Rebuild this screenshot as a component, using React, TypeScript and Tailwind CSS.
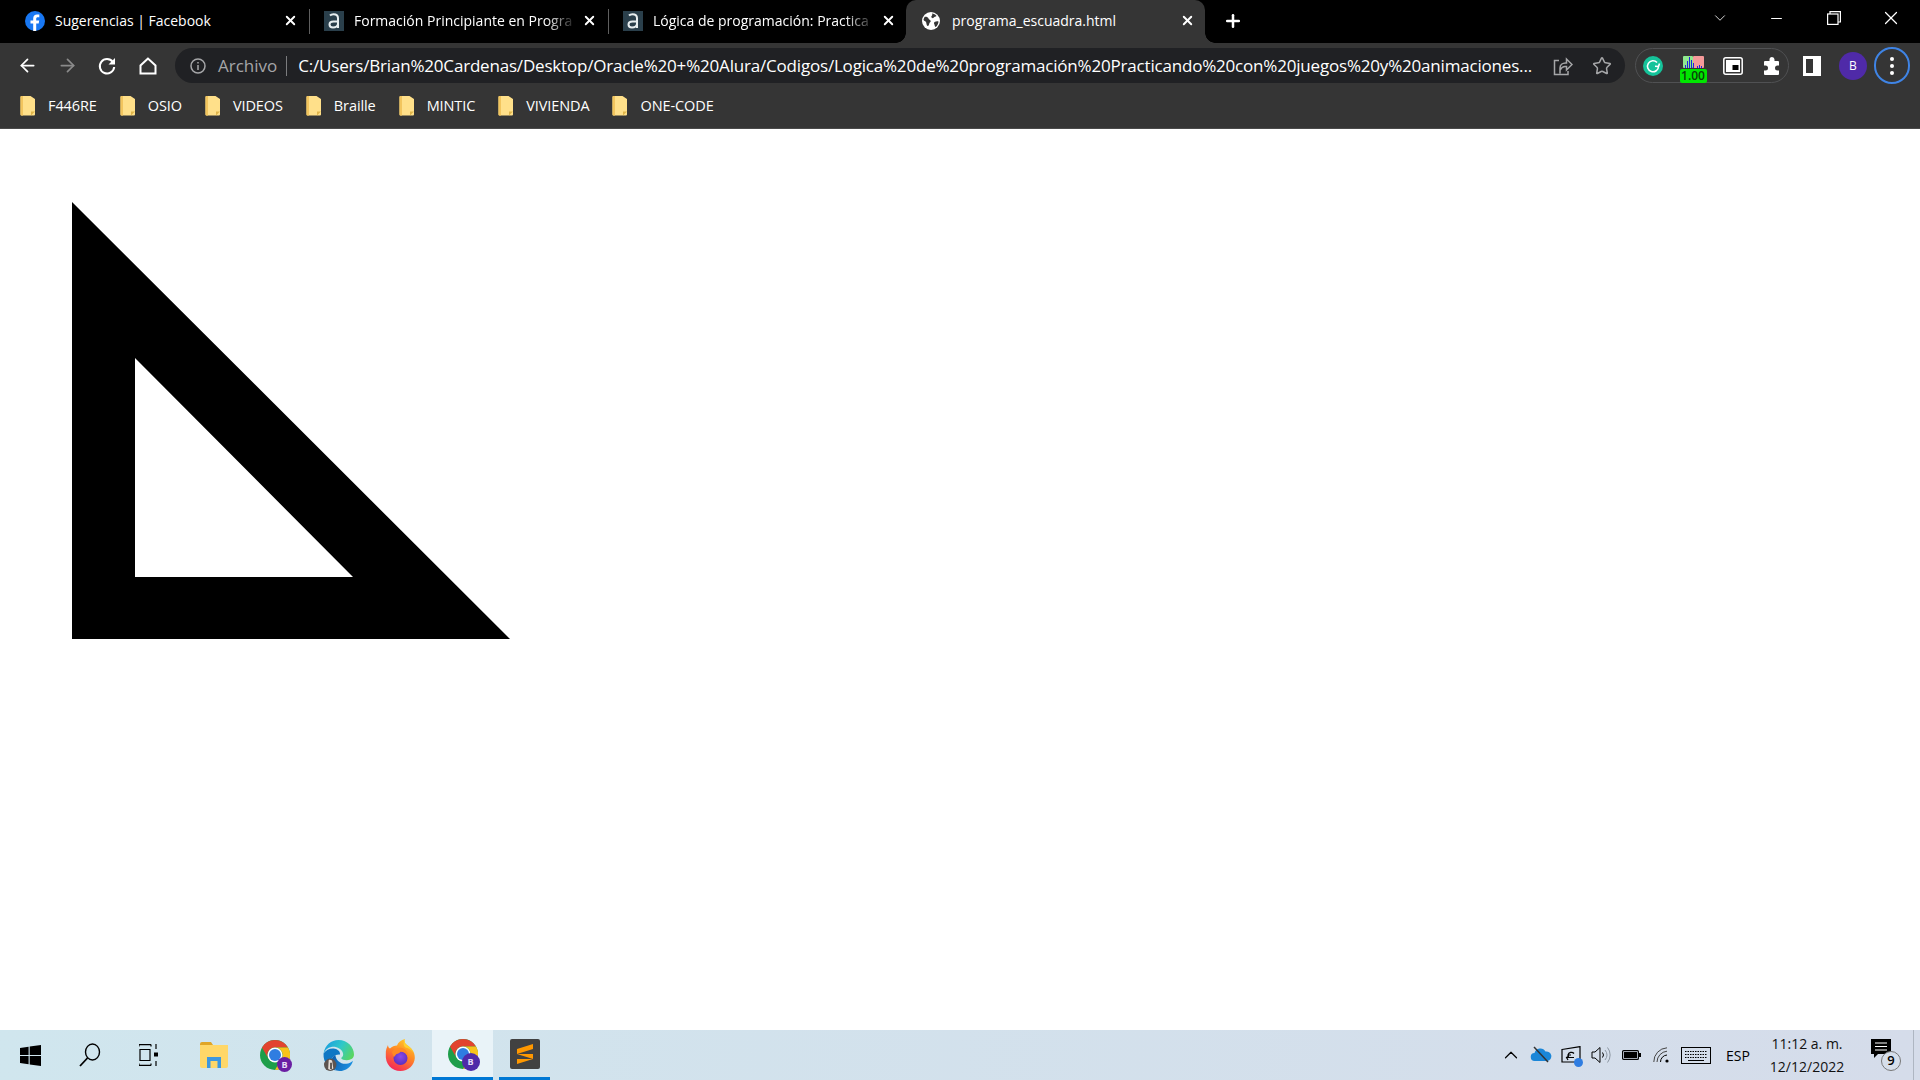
import type { ReactNode } from "react";
import { ArrowLeft, ArrowRight, ChevronDown, ChevronUp, Minus, Plus, Star, X } from "lucide-react";

const FONT = "font-['Open_Sans','Noto_Sans',sans-serif]";

function FacebookIcon() {
  return (
    <svg width="20" height="20" viewBox="0 0 20 20">
      <circle cx="10" cy="10" r="10" fill="#1877f2" />
      <path d="M11.2 20v-7.4h2.5l.5-3h-3V7.8c0-.9.4-1.6 1.700-1.600h1.400V3.600c-.6-.1-1.400-.2-2.200-.2-2.400 0-3.900 1.400-3.900 4v2.200H5.500v3h2.700V20z" fill="#fff" />
    </svg>
  );
}

function AluraIcon() {
  return (
    <div className="flex h-[20px] w-[20px] items-center justify-center bg-[#2a3f4b]">
      <svg width="12" height="16" viewBox="0 0 12 16" fill="none" stroke="#e8eef0" strokeWidth="2">
        <path d="M2 2.500c1-1 2-1.300 3.500-1.300 2.600 0 4.500 1.300 4.500 4V15M10 8.500H5.500C3 8.500 1.500 9.700 1.500 11.500s1.500 3 3.500 3c2.700 0 5-1.500 5-4" />
      </svg>
    </div>
  );
}

function GlobeIcon() {
  return (
    <svg width="18" height="18" viewBox="0 0 18 18">
      <circle cx="9" cy="9" r="9" fill="#fff" />
      <path d="M2.500 5c1.500-.5 3.500 0 4 1.500.4 1.300 2 1.200 2.200 2.500.2 1.200-1.200 1.300-1.400 2.500-.2 1-.6 2.500-1.600 2.500-1.200-.5-1.200-2.500-1.500-3.500C3.800 9 1.500 9 1.500 7.500zM10 1.500c1.500 0 3.800 1 4.500 2.500-.8.800-2.500.7-3 1.800-.3.800-2 .2-2.200-.8C9.100 4 11 3.300 10 1.500zM12.500 10c1-.6 3-.8 4-.5 0 2-1.200 4.300-2.800 5.500-1.200-.5-.9-2-1.500-3-.3-.7-.3-1.600.3-2z" fill="#353535" />
    </svg>
  );
}

function Tab({ icon, title, active, fade }: { icon: ReactNode; title: string; active?: boolean; fade?: boolean }) {
  return (
    <div className={`relative flex h-full w-[299px] shrink-0 items-center pb-[2px] pl-[16px] pr-[10px] ${active ? "rounded-t-[10px] bg-[#353535]" : ""}`}>
      {active && (
        <>
          <div className="absolute bottom-0 left-[-10px] h-[10px] w-[10px] bg-[radial-gradient(circle_at_0_0,#000_9.500px,#353535_10px)]" />
          <div className="absolute bottom-0 right-[-10px] h-[10px] w-[10px] bg-[radial-gradient(circle_at_100%_0,#000_9.500px,#353535_10px)]" />
        </>
      )}
      <div className="flex w-[30px] shrink-0 items-center">{icon}</div>
      <span className={`min-w-0 flex-1 whitespace-nowrap text-[14px] text-white ${fade ? "[mask-image:linear-gradient(to_right,#000_84%,#0002_96%)]" : ""}`}>
        {title}
      </span>
      <X size={15} strokeWidth={3} className="shrink-0 text-white" />
    </div>
  );
}

function TabSeparator() {
  return <div className="my-auto ml-[-1px] h-[25px] w-px shrink-0 translate-x-[2px] bg-[#5f5f5f]" />;
}

function RestoreIcon() {
  return (
    <svg width="14" height="14" viewBox="0 0 14 14" fill="none" stroke="#fff" strokeWidth="1.200">
      <rect x=".6" y="3" width="10.400" height="10.400" />
      <path d="M3 3V.6h10.400V11H11" />
    </svg>
  );
}

function TabStrip() {
  return (
    <div className="flex h-[43px] shrink-0 items-stretch bg-black pl-[9px]">
      <Tab icon={<FacebookIcon />} title="Sugerencias | Facebook" />
      <TabSeparator />
      <Tab icon={<AluraIcon />} title="Formación Principiante en Progra" fade />
      <TabSeparator />
      <Tab icon={<AluraIcon />} title="Lógica de programación: Practica" fade />
      <Tab icon={<GlobeIcon />} title="programa_escuadra.html" active />
      <div className="flex w-[56px] items-center justify-center pb-[2px]">
        <Plus size={20} strokeWidth={3} className="text-white" />
      </div>
      <div className="flex flex-1 items-start justify-end pt-[8px] text-white">
        <div className="flex h-[20px] w-[56px] items-center justify-center">
          <ChevronDown size={18} strokeWidth={1.100} />
        </div>
        <div className="flex h-[20px] w-[57px] items-center justify-center">
          <Minus size={17} strokeWidth={1.400} />
        </div>
        <div className="flex h-[20px] w-[57px] items-center justify-center">
          <RestoreIcon />
        </div>
        <div className="flex h-[20px] w-[58px] items-center justify-center">
          <X size={22} strokeWidth={1.300} />
        </div>
      </div>
    </div>
  );
}

function ReloadIcon() {
  return (
    <svg width="20" height="20" viewBox="0 0 20 20" fill="none">
      <path d="M15.800 6A7.200 7.200 0 1 0 17.200 11" stroke="#fff" strokeWidth="2" />
      <path d="M18 2v6.500h-6.500z" fill="#fff" />
    </svg>
  );
}

function HomeIcon() {
  return (
    <svg width="20" height="20" viewBox="0 0 20 20" fill="none" stroke="#fff" strokeWidth="2">
      <path d="M10 2.500L2.500 9.500v8h15v-8z" strokeLinejoin="miter" />
    </svg>
  );
}

function ShareIcon() {
  return (
    <svg width="20" height="20" viewBox="0 0 20 20" fill="none" stroke="#a5a6a8" strokeWidth="1.500">
      <path d="M7 17.500V12c0-3 2.500-5 5.500-5h1V3L19 8.500 13.500 14V10.500H12C10 10.500 8.500 11.500 7 14M6 4.500H1.500V18.500H15V15" />
    </svg>
  );
}

function ChartExtension() {
  return (
    <div className="relative flex h-[34px] w-[27px] flex-col items-center">
      <svg width="21" height="12" viewBox="0 0 21 12" className="mt-[7px]">
        <rect width="10" height="12" rx="1" fill="#8fe88f" />
        <rect x="10" width="11" height="12" rx="1" fill="#f59a9a" />
        <path d="M2 12V9h1v3zM4 12V5h1v7zM6 12V1h1v11zM8 12V4h1v8zM10 12V7h1v5zM14 12v-2h1v2zM16 12V9h1v3zM18 12v-2h1v2z" fill="#2222dd" />
      </svg>
      <div className="mt-px flex h-[14px] w-[27px] items-center justify-center rounded-[2px] bg-[#00e600] text-[12px] font-semibold leading-none text-[#0b3d0b]">
        1.00
      </div>
    </div>
  );
}

function ToolbarRight() {
  return (
    <>
      <div className="ml-[10px] flex h-[35px] w-[154px] shrink-0 items-center rounded-full border border-[#505153]">
        <div className="flex w-[27px] shrink-0 justify-end">
          <svg width="20" height="20" viewBox="0 0 20 20">
            <circle cx="10" cy="10" r="10" fill="#15c39a" />
            <path d="M14 6.500A5.500 5.500 0 1 0 15.500 10.500M15.500 10.500l-3.500-.2M15.500 10.500l1-3" fill="none" stroke="#fff" strokeWidth="1.600" />
          </svg>
        </div>
        <div className="ml-[14px] flex w-[32px] justify-center">
          <ChartExtension />
        </div>
        <div className="ml-[8px] flex w-[32px] justify-center">
          <svg width="20" height="18" viewBox="0 0 20 18">
            <rect x=".8" y=".8" width="18.400" height="16.400" rx="2" fill="none" stroke="#fff" strokeWidth="1.500" />
            <rect x="3" y="3" width="14" height="12" fill="#fff" />
            <rect x="9.500" y="8" width="6" height="5" fill="#000" />
          </svg>
        </div>
        <div className="ml-[13px] flex w-[20px] justify-center">
          <svg width="18" height="18" viewBox="0 0 18 18" fill="#fff">
            <path d="M6.500 2.500a2.500 2.500 0 0 1 5 0V4H15a1 1 0 0 1 1 1v3.500h-1.500a2.500 2.500 0 0 0 0 5H16V17a1 1 0 0 1-1 1H2a1 1 0 0 1-1-1v-3.500h1.500a2.500 2.500 0 0 0 0-5H1V5a1 1 0 0 1 1-1h4.500z" />
          </svg>
        </div>
      </div>
      <div className="ml-[13px] flex w-[20px] shrink-0 justify-center">
        <div className="h-[20px] w-[18px] border-[3px] border-r-[8px] border-white" />
      </div>
      <div className="ml-[17px] flex h-[28px] w-[28px] shrink-0 items-center justify-center rounded-full bg-[#4f2aa8] text-[12px] text-white">
        B
      </div>
      <div className="ml-[7px] flex h-[37px] w-[36px] shrink-0 flex-col items-center justify-center gap-[3px] rounded-full border-[2px] border-[#3f84e5]">
        <div className="h-[4px] w-[4px] rounded-full bg-white" />
        <div className="h-[4px] w-[4px] rounded-full bg-white" />
        <div className="h-[4px] w-[4px] rounded-full bg-white" />
      </div>
    </>
  );
}

function Toolbar() {
  return (
    <div className="flex h-[45px] shrink-0 items-center bg-[#353535] pl-[17px]">
      <div className="flex w-[158px] shrink-0 items-center text-white">
        <div className="flex w-[40px] justify-start"><ArrowLeft size={21} strokeWidth={2} /></div>
        <div className="flex w-[40px] justify-start text-[#8a8a8a]"><ArrowRight size={21} strokeWidth={2} /></div>
        <div className="flex w-[41px] justify-start"><ReloadIcon /></div>
        <div className="flex w-[37px] justify-start"><HomeIcon /></div>
      </div>
      <div className="flex h-[35px] w-[1450px] shrink-0 items-center rounded-full bg-[#202124] pl-[14px] text-[17px]">
        <svg width="18" height="18" viewBox="0 0 18 18" fill="none" stroke="#a5a6a8" strokeWidth="1.500" className="shrink-0">
          <circle cx="9" cy="9" r="7" />
          <path d="M9 8v5M9 5v1.500" />
        </svg>
        <span className="ml-[11px] whitespace-nowrap text-[#a5a6a8]">Archivo</span>
        <div className="ml-[9px] h-[20px] w-px shrink-0 bg-[#7b7c7e]" />
        <span className="ml-[11px] w-[1236px] shrink-0 whitespace-nowrap tracking-[-0.19px] text-white">
          C:/Users/Brian%20Cardenas/Desktop/Oracle%20+%20Alura/Codigos/Logica%20de%20programación%20Practicando%20con%20juegos%20y%20animaciones...
        </span>
        <div className="ml-[19px] flex w-[20px] shrink-0 justify-center"><ShareIcon /></div>
        <div className="ml-[19px] flex w-[20px] shrink-0 justify-center"><Star size={20} strokeWidth={1.800} className="text-[#a5a6a8]" /></div>
      </div>
      <ToolbarRight />
    </div>
  );
}

function FolderIcon() {
  return (
    <svg width="16" height="20" viewBox="0 0 16 20" className="shrink-0">
      <path d="M1.500 0h9l4.500 3v15.500a1 1 0 0 1-1 1H1.500a1 1 0 0 1-1-1V1a1 1 0 0 1 1-1z" fill="#ffe08a" />
      <path d="M11 19.500v-4h4" fill="#e0b54a" />
      <path d="M.5 1a1 1 0 0 1 1-1H3v19.500H1.500a1 1 0 0 1-1-1z" fill="#f2c55e" />
    </svg>
  );
}

const bookmarks = ["F446RE", "OSIO", "VIDEOS", "Braille", "MINTIC", "VIVIENDA", "ONE-CODE"];

function BookmarksBar() {
  return (
    <div className="flex h-[41px] shrink-0 items-center gap-[23px] border-b border-[#4a4a4a] bg-[#353535] pb-[5px] pl-[20px]">
      {bookmarks.map((name) => (
        <div key={name} className="flex items-center gap-[12px]">
          <FolderIcon />
          <span className="text-[14.500px] tracking-[-0.1px] text-white">{name}</span>
        </div>
      ))}
    </div>
  );
}

function Escuadra() {
  return (
    <svg width="438" height="437" viewBox="0 0 438 437" className="ml-[72px] mt-[73px]">
      <path fillRule="evenodd" d="M0 0L0 437L438 437ZM63 156L281 375L63 375Z" fill="#000" />
    </svg>
  );
}

function ChromeIcon({ badge }: { badge: string }) {
  return (
    <div className="relative">
      <svg width="30" height="30" viewBox="0 0 30 30">
        <circle cx="15" cy="15" r="15" fill="#1e9e4a" />
        <path d="M15 0a15 15 0 0 1 13 7.500H15A7.500 7.500 0 0 0 8.500 19L2 7.500A15 15 0 0 1 15 0z" fill="#e2432f" />
        <path d="M28 7.500A15 15 0 0 1 15 30l6.500-11.200A7.500 7.500 0 0 0 15 7.500z" fill="#f8c21c" />
        <circle cx="15" cy="15" r="7.500" fill="#fff" />
        <circle cx="15" cy="15" r="6" fill="#2f7de1" />
      </svg>
      <div className={`absolute bottom-[-2px] right-[-2px] flex items-center justify-center rounded-full text-[9px] font-bold text-[#e6dcf5] ${badge}`}>
        B
      </div>
    </div>
  );
}

function EdgeIcon() {
  return (
    <svg width="31" height="31" viewBox="0 0 30 30">
      <defs>
        <linearGradient id="edgeTop" x1="0" y1="0.300" x2="1" y2="0.700">
          <stop offset="0" stopColor="#1b9ee0" />
          <stop offset="0.500" stopColor="#2fc8c8" />
          <stop offset="1" stopColor="#5bd65f" />
        </linearGradient>
        <linearGradient id="edgeBottom" x1="0" y1="0" x2="1" y2="0.300">
          <stop offset="0" stopColor="#0d5aa8" />
          <stop offset="1" stopColor="#1b8fe0" />
        </linearGradient>
      </defs>
      <path d="M.5 13C2 5 8 0 15 0c9 0 15 7 15 14 0 3.500-3 5.500-7 5.500-2.500 0-5-.8-5.500-2.200 1.800-1.200 2.500-3 1.700-5C17.800 8.500 13 6 8 6.800 4.500 7.500 2 10 .5 13z" fill="url(#edgeTop)" />
      <path d="M.5 13c2.500-3.500 7-5.500 11-4.500 3 .7 5.200 2.800 5 5.500-5-.5-8.500 2.500-8.500 7 0 3.500 2.500 6.500 5 8.500C6 29 0 22 .5 13z" fill="#0f77c4" />
      <path d="M13 29.500c-3-2.500-5-5.500-5-8.500 0-3 1.800-5.500 4-6.500.3 5 5 9 10.500 8.500 2.700-.2 5-1.500 6.500-3-1.500 6-7 10-13 10z" fill="url(#edgeBottom)" />
      <circle cx="7" cy="24" r="6" fill="#5c5450" />
      <path d="M5.500 19.500c1.500-.7 3.500 0 3.500 1.500l1 6.500-3 1.500-2-1z" fill="#e5ddd6" />
      <path d="M7 22h1.500v6H7z" fill="#3b3532" />
    </svg>
  );
}

function FirefoxIcon() {
  return (
    <svg width="30" height="32" viewBox="0 0 30 32">
      <defs>
        <linearGradient id="foxBody" x1="0.800" y1="0" x2="0.300" y2="1">
          <stop offset="0" stopColor="#ffd02e" />
          <stop offset="0.450" stopColor="#ff8a24" />
          <stop offset="1" stopColor="#f5245a" />
        </linearGradient>
        <radialGradient id="foxCore" cx="0.500" cy="0.400" r="0.600">
          <stop offset="0" stopColor="#8a4be8" />
          <stop offset="1" stopColor="#5b2fc0" />
        </radialGradient>
      </defs>
      <path d="M.8 15C.5 11 2 8 3 6c0 2 .8 3 2 3.500C7 7.500 9.500 6.500 12 6.500 13 3.500 16 1 20 0c-1 2.500-.2 4.500 2 6 4.500 3 8 7 7.800 13-.3 7-6.500 13-14.300 13C6.500 32 0 25 .8 15z" fill="url(#foxBody)" />
      <circle cx="15.500" cy="19" r="7" fill="url(#foxCore)" />
      <path d="M7 13c2-3 6-5 10-4 4 1 6.500 4.500 5.800 9-1.300-3.500-4-5.300-7.300-5.300-.6 1.300-2.500 2-4 2.300L9 18c-1-1.500-1.500-3.500-2-5z" fill="#ff8a24" />
      <path d="M20 0c-1 2.500-.2 4.500 2 6 3 2 5.600 4.500 6.900 8-1.900-2.700-4.900-4.700-8.400-5.500C18 7 18.500 3 20 0z" fill="#ffd02e" />
    </svg>
  );
}

function SublimeIcon() {
  return (
    <div className="flex h-[30px] w-[30px] items-center justify-center rounded-[2px] bg-[#414141]">
      <svg width="20" height="22" viewBox="0 0 20 22" fill="#ff9800">
        <path d="M18 1v5L2 11V6zM2 11l16 5v-5zM18 16L2 21v-5z" />
      </svg>
    </div>
  );
}

function ExplorerIcon() {
  return (
    <svg width="28" height="26" viewBox="0 0 28 26">
      <path d="M0 2a2 2 0 0 1 2-2h9l2 3H2v5H0z" fill="#e0a526" />
      <path d="M0 3h28v21a2 2 0 0 1-2 2H2a2 2 0 0 1-2-2z" fill="#ffd768" />
      <path d="M7 26V15h14v11h-3.500v-7h-7v7z" fill="#3d97df" />
    </svg>
  );
}

function TaskViewIcon() {
  return (
    <svg width="20" height="22" viewBox="0 0 20 22" fill="none" stroke="#000" strokeWidth="1.200">
      <path d="M0 .6h12M0 21.400h12M1 5.500h10v11H1zM0 2.500V.6M12 2.500V.6M0 21.400v-2M12 21.400v-2M17 0v5M17 17v5" />
      <rect x="15" y="8.500" width="4" height="4" fill="#000" stroke="none" />
    </svg>
  );
}

function TaskbarLeft() {
  return (
    <div className="flex h-full items-center">
      <div className="flex w-[60px] justify-center">
        <svg width="21" height="21" viewBox="0 0 21 21" fill="#000">
          <path d="M0 3l8.600-1.200v8.200H0zM9.700 1.600L21 0v10H9.700zM0 11h8.600v8.200L0 18zM9.700 11H21v10L9.700 19.400z" />
        </svg>
      </div>
      <div className="flex w-[60px] justify-center">
        <svg width="22" height="24" viewBox="0 0 22 24" fill="none" stroke="#000" strokeWidth="1.400">
          <ellipse cx="13.500" cy="9" rx="7" ry="8" />
          <path d="M8.500 15L1 23" strokeWidth="1.800" />
        </svg>
      </div>
      <div className="flex w-[58px] justify-center"><TaskViewIcon /></div>
      <div className="flex w-[72px] justify-center"><ExplorerIcon /></div>
      <div className="flex w-[50px] justify-center">
        <ChromeIcon badge="h-[15px] w-[15px] bg-[#6a1fa3]" />
      </div>
      <div className="flex w-[76px] justify-center"><EdgeIcon /></div>
      <div className="flex w-[48px] justify-center"><FirefoxIcon /></div>
      <div className="ml-[8px] flex h-full w-[61px] items-center justify-center border-b-[3px] border-[#0078d4] bg-[#e9f3f8]">
        <ChromeIcon badge="h-[18px] w-[18px] bg-[#4f2aa8]" />
      </div>
      <div className="ml-[6px] flex h-full w-[51px] items-center justify-center border-b-[3px] border-[#0078d4]">
        <SublimeIcon />
      </div>
    </div>
  );
}

function TraySlot({ w, children }: { w: string; children: ReactNode }) {
  return <div className={`flex items-center justify-center ${w}`}>{children}</div>;
}

function TaskbarRight() {
  return (
    <div className="flex h-full items-center pr-[6px] text-black">
      <TraySlot w="w-[30px]"><ChevronUp size={22} strokeWidth={1.300} /></TraySlot>
      <TraySlot w="w-[30px]">
        <svg width="22" height="18" viewBox="0 0 22 18">
          <path d="M5 15a4 4 0 0 1-.5-8 6 6 0 0 1 11-1.500A4.500 4.500 0 0 1 17.500 15z" fill="#1a86d8" />
          <path d="M4 1l14 15" stroke="#333" strokeWidth="1.500" />
        </svg>
      </TraySlot>
      <TraySlot w="w-[30px]">
        <div className="relative">
          <svg width="20" height="19" viewBox="0 0 20 19" fill="none" stroke="#000" strokeWidth="1.200">
            <path d="M1 3.500L19 .6V16H1zM13 7.500a3.500 3.500 0 0 0-6 1.500v2.500h6M7 9h3M7 14l-1.500-2.500L8 10" />
          </svg>
          <div className="absolute bottom-[-2px] right-[-2px] h-[9px] w-[9px] rounded-full bg-[#2f7de1]" />
        </div>
      </TraySlot>
      <TraySlot w="w-[30px]">
        <svg width="21" height="18" viewBox="0 0 21 18" fill="none" stroke="#000" strokeWidth="1">
          <path d="M1 6h3l5-4.500v15L4 12H1z" />
          <path d="M11.500 6.500a4 4 0 0 1 0 5" />
          <path d="M14 4a8 8 0 0 1 0 10M16.500 1.500a12 12 0 0 1 0 15" stroke="#8c96a2" />
        </svg>
      </TraySlot>
      <TraySlot w="w-[30px]">
        <svg width="19" height="10" viewBox="0 0 19 10">
          <rect x=".6" y=".6" width="15.800" height="8.800" rx="1" fill="none" stroke="#000" strokeWidth="1.200" />
          <rect x="2" y="2" width="13" height="6" fill="#000" />
          <rect x="17" y="3" width="2" height="4" fill="#000" />
        </svg>
      </TraySlot>
      <TraySlot w="w-[31px]">
        <svg width="18" height="16" viewBox="0 0 18 16" fill="none" stroke="#000" strokeWidth="1">
          <path d="M.8 15A14 14 0 0 1 14 .8M4 15A11 11 0 0 1 14 4.200" stroke="#444" />
          <path d="M7.500 15A7 7 0 0 1 14 8" />
          <circle cx="14" cy="14" r="1.600" fill="#000" stroke="none" />
        </svg>
      </TraySlot>
      <TraySlot w="w-[38px]">
        <svg width="30" height="17" viewBox="0 0 30 17" fill="none" stroke="#000" strokeWidth="1">
          <rect x=".5" y=".5" width="29" height="16" />
          <path d="M4 4.500h22M4 7.500h22M4 10.500h22" strokeDasharray="1.500 1" />
          <path d="M7 13.500h16" />
        </svg>
      </TraySlot>
      <TraySlot w="w-[46px]"><span className="text-[14px]">ESP</span></TraySlot>
      <div className="flex w-[92px] flex-col items-center text-[14px] leading-[23px] text-[#111]">
        <span>11:12 a. m.</span>
        <span>12/12/2022</span>
      </div>
      <TraySlot w="w-[60px]">
        <div className="relative h-[26px] w-[24px]">
          <svg width="20" height="20" viewBox="0 0 20 20" className="mt-[-3px]">
            <path d="M0 0h20v15H7l-4 4v-4H0z" fill="#000" />
            <path d="M4 4h12M4 7.500h12M4 11h12" stroke="#fff" strokeWidth="1" />
          </svg>
          <div className="absolute bottom-[-3px] right-[-6px] flex h-[20px] w-[20px] items-center justify-center rounded-full border border-[#777] bg-[#d6deea] text-[13px] font-semibold">
            9
          </div>
        </div>
      </TraySlot>
      <div className="h-full w-px shrink-0 bg-[#aeb6c2]" />
    </div>
  );
}

export default function App() {
  return (
    <div className={`flex h-[1080px] w-[1920px] flex-col overflow-hidden bg-white ${FONT}`}>
      <TabStrip />
      <Toolbar />
      <BookmarksBar />
      <main className="flex-1 bg-white">
        <Escuadra />
      </main>
      <footer className="flex h-[50px] shrink-0 items-center justify-between bg-gradient-to-r from-[#d0e6ee] to-[#d5dcea]">
        <TaskbarLeft />
        <TaskbarRight />
      </footer>
    </div>
  );
}
